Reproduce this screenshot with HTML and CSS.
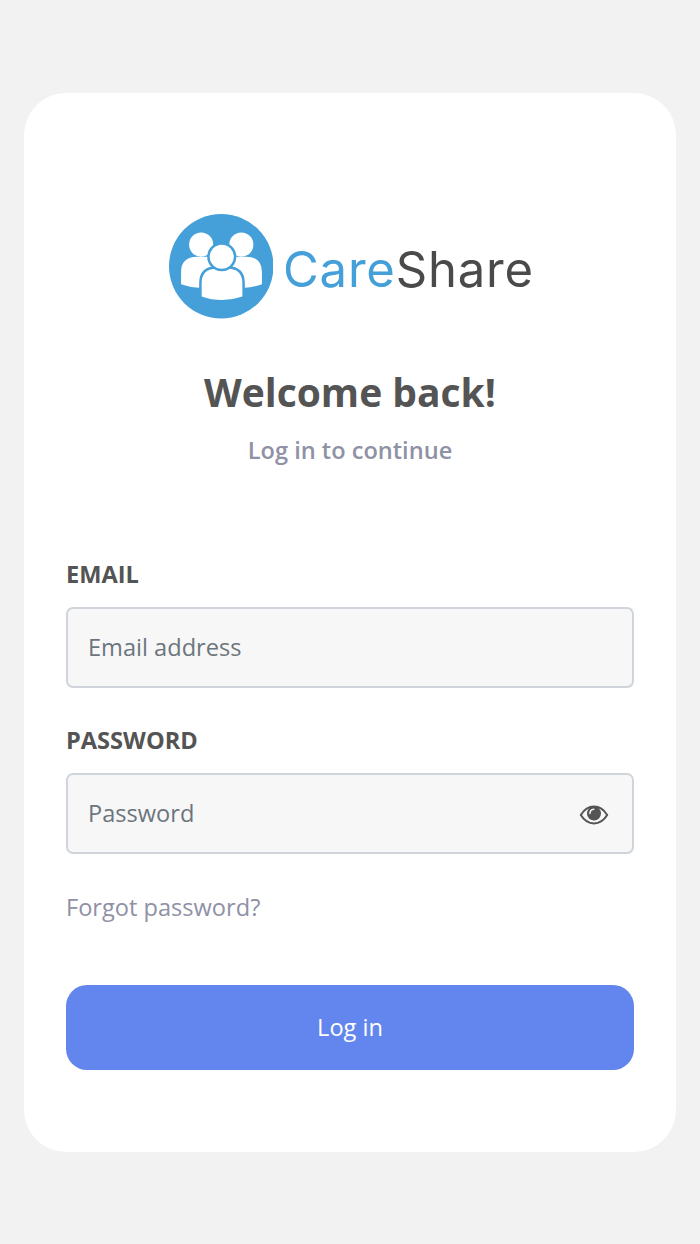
FILE: index.html
```html
<!DOCTYPE html>
<html lang="en">
<head>
<meta charset="utf-8">
<title>CareShare – Log in</title>
<link rel="stylesheet" href="styles.css">
</head>
<body>
<main class="card">
  <div class="brand">
    <svg class="brand-mark" viewBox="0 0 104 104" aria-hidden="true">
      <circle cx="52" cy="52" r="52" fill="#45a0d9"/>
      <g fill="#fff">
        <circle cx="32" cy="30.500" r="12"/>
        <circle cx="72" cy="30.500" r="12"/>
        <path d="M12 70V58Q12 42.500 28 42.500H40L50 60V73.500H30Q20 73 12 70Z"/>
        <path d="M92.500 70V58Q92.500 42.500 76.500 42.500H64L54 60V73.500H75Q84 73 92.500 70Z"/>
      </g>
      <g fill="#fff" stroke="#45a0d9" stroke-width="5" paint-order="stroke">
        <path d="M32.500 82V69Q32.500 54.500 47 54.500H58.500Q73 54.500 73 69V82Q63 85.500 53 85.500Q42 85.500 32.500 82Z"/>
        <circle cx="52.500" cy="42.500" r="12"/>
      </g>
    </svg>
    <span class="brand-name"><span class="brand-care">Care</span><span class="brand-share">Share</span></span>
  </div>
  <h1 class="title">Welcome back!</h1>
  <p class="subtitle">Log in to continue</p>
  <form class="form">
    <label class="label" for="email">EMAIL</label>
    <div class="field"><input class="input" id="email" type="email" placeholder="Email address"></div>
    <label class="label" for="password">PASSWORD</label>
    <div class="field">
      <input class="input" id="password" type="password" placeholder="Password">
      <svg class="eye" viewBox="0 0 30 20" aria-hidden="true">
        <path d="M1.800 10Q7 1.600 15 1.600T28.200 10Q23 18.400 15 18.400T1.800 10Z" fill="none" stroke="#545454" stroke-width="2" stroke-linejoin="round"/>
        <circle cx="15" cy="8.500" r="7" fill="#545454"/>
        <path d="M10.900 8.500Q11 4.700 14.800 4.300" fill="none" stroke="#f7f7f7" stroke-width="1.500" stroke-linecap="round"/>
      </svg>
    </div>
    <a class="forgot">Forgot password?</a>
    <button class="submit" type="button">Log in</button>
  </form>
</main>
</body>
</html>
```
FILE: styles.css
```css
* { box-sizing: border-box; }
body {
  margin: 0;
  min-height: 1244px;
  padding: 93px 24px 0;
  background: #f2f2f2;
  color: #545454;
  font-family: "Open Sans", sans-serif;
  font-size: 23.6px;
}
.card {
  height: 1059px;
  padding: 121px 42px 0;
  border-radius: 42px;
  background: #fff;
}
.brand {
  display: flex;
  height: 105px;
  padding-left: 102.5px;
}
.brand-mark { width: 104.5px; height: 104.5px; flex: none; }
.brand-name {
  margin-left: 10px;
  padding-top: 21px;
  font: 400 49px/70px Inter, sans-serif;
  letter-spacing: 0.8px;
  white-space: nowrap;
}
.brand-care { color: #45a0d9; }
.brand-share { color: #4a4a4b; }
.title {
  margin: 45px 0 0;
  font-size: 39px;
  line-height: 56px;
  font-weight: 700;
  text-align: center;
}
.subtitle {
  margin: 13px 0 0;
  color: #8f91a5;
  font-size: 23.6px;
  line-height: 34px;
  font-weight: 600;
  text-align: center;
}
.form {
  display: flex;
  flex-direction: column;
  margin-top: 90px;
}
.label {
  height: 34px;
  margin-bottom: 16px;
  font-size: 23.6px;
  line-height: 34px;
  font-weight: 700;
}
.field {
  display: flex;
  align-items: center;
  height: 81px;
  margin-bottom: 35px;
  padding: 0 23px 0 20px;
  border: 2px solid #d0d5db;
  border-radius: 7px;
  background: #f7f7f7;
}
.input {
  flex: 1;
  min-width: 0;
  height: 70px;
  padding: 0 0 2px;
  border: 0;
  outline: 0;
  background: transparent;
  color: #6c757d;
  font: 400 23.6px "Open Sans", sans-serif;
}
.input::placeholder { color: #6c757d; opacity: 1; }
.eye { width: 30px; height: 20px; margin-top: 3px; }
.forgot { margin-top: 1px; color: #8f91a5; line-height: 34px; }
.submit {
  height: 85px;
  margin-top: 61px;
  padding: 0 0 2px;
  border: 0;
  border-radius: 21px;
  background: #6286ee;
  color: #fff;
  font: 400 23.6px "Open Sans", sans-serif;
}
```
